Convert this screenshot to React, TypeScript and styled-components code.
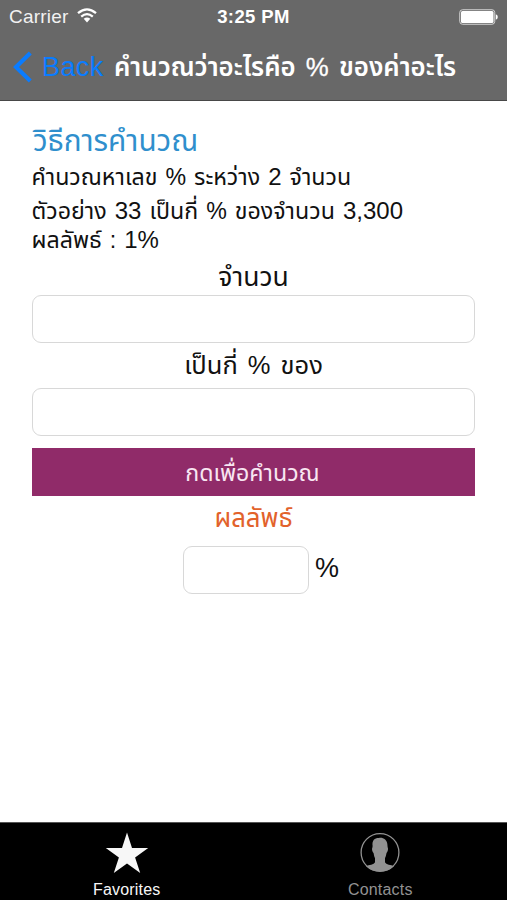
import React from 'react';
import styled, { createGlobalStyle } from 'styled-components';

const GlobalStyle = createGlobalStyle`
  * { box-sizing: border-box; }
  body { margin: 0; background: #fff; }
  body, input, button { font-family: "Liberation Sans", "Noto Sans Thai", "Noto Sans", sans-serif; }
`;

const Screen = styled.div`
  width: 507px;
  height: 900px;
  display: flex;
  flex-direction: column;
  overflow: hidden;
  background: #fff;
`;

const Header = styled.header`
  height: 101px;
  flex: none;
  background: #686868;
  border-bottom: 1px solid #484848;
  color: #fff;
`;

const StatusBar = styled.div`
  height: 33px;
  display: grid;
  grid-template-columns: 1fr auto 1fr;
  align-items: center;
  padding: 0 9px 0 9px;
  font-size: 19px;
  line-height: 33px;
`;

const Carrier = styled.div`
  display: flex;
  align-items: center;
  gap: 9px;
  color: #f2f2f2;
  letter-spacing: 0.2px;
  svg { margin-top: -2px; }
`;

const Clock = styled.div`
  font-weight: 700;
  font-size: 18.5px;
  letter-spacing: 0.4px;
`;

const BatterySlot = styled.div`
  display: flex;
  justify-content: flex-end;
`;

const NavBar = styled.div`
  height: 67px;
  display: flex;
  align-items: center;
  padding-left: 13px;
`;

const BackButton = styled.button`
  display: flex;
  align-items: center;
  gap: 9px;
  width: 101px;
  padding: 0;
  border: 0;
  background: none;
  color: #0a7cff;
  font-size: 27px;
  letter-spacing: 0.4px;
  line-height: 34px;
  white-space: nowrap;
`;

const Title = styled.h1`
  margin: 0;
  font-size: 25.8px;
  font-weight: 600;
  line-height: 34px;
  white-space: nowrap;
  word-spacing: 3px;
`;

const Percent = styled.span`
  font-weight: 400;
  -webkit-text-stroke: 0.3px currentColor;
`;

const Content = styled.main`
  flex: 1;
  display: flex;
  flex-direction: column;
  padding: 20px 32px 0 32px;
`;

const Heading = styled.h2`
  margin: 0 0 0 1px;
  height: 39px;
  font-size: 29.7px;
  font-weight: 400;
  line-height: 39px;
  color: #2f8fcd;
`;

const Line = styled.p<{ $height: number }>`
  margin: 0 0 0 -0.5px;
  height: ${(p) => p.$height}px;
  line-height: ${(p) => p.$height - 2}px;
  font-size: 23.2px;
  word-spacing: 1.6px;
  white-space: nowrap;
  color: #111;
`;

const Numeric = styled.span`
  font-size: 24px;
  line-height: 1;
`;

const Label = styled.label<{ $top?: number; $height: number; $size: number; $color?: string }>`
  height: ${(p) => p.$height}px;
  padding-top: ${(p) => p.$top ?? 0}px;
  line-height: 40px;
  font-size: ${(p) => p.$size}px;
  word-spacing: 3px;
  text-align: center;
  white-space: nowrap;
  color: ${(p) => p.$color ?? '#111'};
`;

const Field = styled.input<{ $width?: number }>`
  width: ${(p) => (p.$width ? `${p.$width}px` : '100%')};
  height: 48px;
  flex: none;
  padding: 0 12px;
  border: 1px solid #d8d8d8;
  border-radius: 9px;
  background: #fff;
  font-size: 24px;
  outline: none;
`;

const SubmitButton = styled.button`
  height: 48px;
  flex: none;
  margin-top: 12px;
  padding: 2px 2px 0 0;
  border: 0;
  background: #902b69;
  color: #f8e6f2;
  font-size: 23.2px;
  line-height: 46px;
`;

const ResultRow = styled.div`
  display: flex;
  gap: 6px;
  padding-left: 151px;
  font-size: 27px;
  line-height: 44px;
  color: #111;
`;

const TabBar = styled.nav`
  height: 78px;
  flex: none;
  display: grid;
  grid-template-columns: 1fr 1fr;
  background: #000;
  border-top: 1px solid #555;
`;

const Tab = styled.a<{ $active?: boolean }>`
  display: flex;
  flex-direction: column;
  align-items: center;
  padding-top: 9px;
  font-size: 16px;
  letter-spacing: 0.2px;
  line-height: 20px;
  color: ${(p) => (p.$active ? '#f7f7f7' : '#929292')};
  svg { flex: none; margin-bottom: 6px; }
`;

const WifiIcon = () => (
  <svg width="20" height="15" viewBox="0 0 20 15" fill="none" stroke="#fff" strokeWidth="2.3">
    <path d="M1 5.2Q10-2.5 19 5.2M4.2 8.6Q10 3.6 15.8 8.6" />
    <path d="M6.7 10.8Q10 8 13.3 10.8L10 14.5Z" fill="#fff" stroke="none" />
  </svg>
);

const BatteryIcon = () => (
  <svg width="39" height="16" viewBox="0 0 39 16">
    <rect x=".75" y=".75" width="35" height="14.5" rx="2.8" fill="#686868" stroke="#d5d5d5" />
    <rect x="2" y="2" width="32.5" height="12" rx="1.5" fill="#fff" />
    <path d="M36.8 5.2Q38.8 5.8 38.8 8T36.8 10.8Z" fill="#fff" />
  </svg>
);

const ChevronIcon = () => (
  <svg width="20" height="32" viewBox="0 0 20 32" fill="none" stroke="#0a7cff" strokeWidth="4.2">
    <path d="M17.3 2L3 16L17.3 30" />
  </svg>
);

const StarIcon = () => (
  <svg width="44" height="42" viewBox="0 0 44 42" fill="#f7f7f7">
    <path d="M22 .5L27 16H43.2L30.1 25.5L35.2 41L22 31.4L8.8 41L13.9 25.5L.8 16H17Z" />
  </svg>
);

const ContactIcon = () => (
  <svg width="40" height="42" viewBox="0 0 40 42">
    <circle cx="20" cy="20.5" r="18.9" fill="none" stroke="#929292" strokeWidth="1.3" />
    <path
      fill="#929292"
      d="M12.6 14C11.8 8 15 5.8 19 6C21 5 27.8 6.2 27.5 14C27.5 16 28.5 16 27.8 18.5C27.4 20.2 26.7 20.2 26.4 21.5C26 23.5 25.6 25 25 26V30.2C26 32.8 31 32.7 34 34.2Q28 39.6 20 39.6T6 34.2C9 32.7 14 32.8 15 30.2V26C14.4 25 14 23.5 13.7 21.5C13.3 20.2 12.6 20.2 12.2 18.5C11.7 16 12.6 16 12.6 14Z"
    />
  </svg>
);

export default function App() {
  return (
    <Screen>
      <GlobalStyle />
      <Header>
        <StatusBar>
          <Carrier>Carrier <WifiIcon /></Carrier>
          <Clock>3:25 PM</Clock>
          <BatterySlot><BatteryIcon /></BatterySlot>
        </StatusBar>
        <NavBar>
          <BackButton><ChevronIcon />Back</BackButton>
          <Title>คำนวณว่าอะไรคือ <Percent>%</Percent> ของค่าอะไร</Title>
        </NavBar>
      </Header>
      <Content>
        <Heading>วิธีการคำนวณ</Heading>
        <Line $height={36}>คำนวณหาเลข % ระหว่าง <Numeric>2</Numeric> จำนวน</Line>
        <Line $height={32}>ตัวอย่าง <Numeric>33</Numeric> เป็นกี่ % ของจำนวน <Numeric>3,300</Numeric></Line>
        <Line $height={26}>ผลลัพธ์ : <Numeric>1%</Numeric></Line>
        <Label $height={41} $top={3} $size={26.5}>จำนวน</Label>
        <Field aria-label="จำนวน" />
        <Label $height={45} $top={2} $size={25.5}>เป็นกี่ % ของ</Label>
        <Field aria-label="เป็นกี่ % ของ" />
        <SubmitButton>กดเพื่อคำนวณ</SubmitButton>
        <Label $height={50} $top={2} $size={25.8} $color="#e2622b">ผลลัพธ์</Label>
        <ResultRow><Field $width={126} aria-label="ผลลัพธ์" readOnly />%</ResultRow>
      </Content>
      <TabBar>
        <Tab $active><StarIcon />Favorites</Tab>
        <Tab><ContactIcon />Contacts</Tab>
      </TabBar>
    </Screen>
  );
}
